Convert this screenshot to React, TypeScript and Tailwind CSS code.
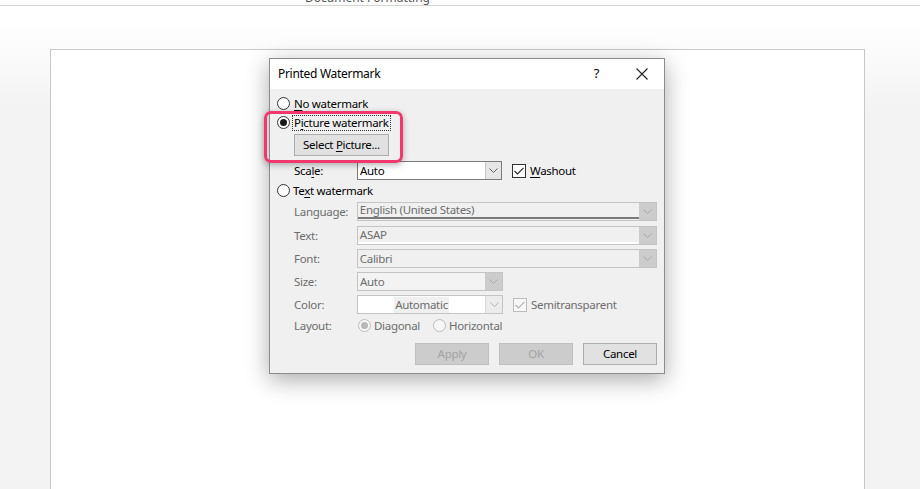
import React from "react";

const FONT = { fontFamily: '"Noto Sans", "Open Sans", sans-serif' };

function Radio({ checked, disabled }: { checked?: boolean; disabled?: boolean }) {
  return (
    <span
      className={`flex h-[13px] w-[13px] shrink-0 items-center justify-center rounded-full border ${
        disabled ? "border-[#bcbcbc] bg-[#f7f7f7]" : "border-[#333333] bg-white"
      }`}
    >
      {checked && (
        <span className={`h-[7px] w-[7px] rounded-full ${disabled ? "bg-[#b8b8b8]" : "bg-[#1a1a1a]"}`} />
      )}
    </span>
  );
}

function Check({ disabled }: { disabled?: boolean }) {
  return (
    <span
      className={`flex h-[14px] w-[14px] shrink-0 items-center justify-center border ${
        disabled ? "border-[#bcbcbc] bg-[#f7f7f7]" : "border-[#333333] bg-white"
      }`}
    >
      <svg width="10" height="8" viewBox="0 0 10 8">
        <path d="M0.5 4 L3.5 7 L9.5 0.8" fill="none" stroke={disabled ? "#b0b0b0" : "#222"} strokeWidth="1.1" />
      </svg>
    </span>
  );
}

function Chevron({ color }: { color: string }) {
  return (
    <svg width="9" height="5" viewBox="0 0 9 5">
      <path d="M0.5 0.5 L4.5 4.5 L8.5 0.5" fill="none" stroke={color} strokeWidth="1" />
    </svg>
  );
}

function U({ children }: { children: React.ReactNode }) {
  return <span className="underline decoration-[1px] underline-offset-[2px]">{children}</span>;
}

export default function App() {
  return (
    <div
      className="h-[489px] w-[920px] overflow-hidden bg-[linear-gradient(#ffffff_0px,#ffffff_24px,#f3f3f3_110px)] text-[11.5px] tracking-[-0.3px] text-black"
      style={FONT}
    >
      {/* top band */}
      <div className="h-[6px] overflow-hidden border-b border-[#d4d4d4] bg-white">
        <div className="-mt-[9px] pl-[305px] text-[12px] leading-[14px] tracking-normal text-[#555555]">
          Document Formatting
        </div>
      </div>

      {/* document page */}
      <div className="ml-[50px] mt-[43px] h-[460px] w-[815px] border border-[#c8c8c8] bg-white">
        <div className="relative ml-[218px] mt-[8px] w-[396px] border border-[#8c8c8c] bg-[#f0f0f0] shadow-[0_6px_22px_rgba(0,0,0,0.33)]">
          {/* title bar */}
          <div className="flex h-[30px] items-center bg-white pl-[8px]">
            <span className="flex-1 text-[12px]">Printed Watermark</span>
            <span className="mr-[37px] text-[13px]">?</span>
            <svg className="mr-[16px]" width="12" height="12" viewBox="0 0 12 12">
              <path d="M0.5 0.5 L11.5 11.5 M11.5 0.5 L0.5 11.5" stroke="#222" strokeWidth="1.1" />
            </svg>
          </div>

          {/* body */}
          <div className="flex flex-col pb-[8px] pl-[7px] pr-[7px] pt-[5px]">
            <div className="flex h-[19px] items-center gap-[3px]">
              <Radio />
              <span className="ml-[1px]">
                <U>N</U>o watermark
              </span>
            </div>
            <div className="flex h-[19px] items-center gap-[2px]">
              <Radio checked />
              <span className="border border-dotted border-[#333333] px-[1px] leading-[14px]">
                P<U>i</U>cture watermark
              </span>
            </div>
            <div className="ml-[17px] mt-[2px] flex h-[22px] w-[95px] items-center justify-center border border-[#adadad] bg-[#e1e1e1]">
              <span>
                Select <U>P</U>icture...
              </span>
            </div>

            <div className="ml-[17px] mt-[5px] flex h-[19px] items-center">
              <span className="w-[63px]">
                Sca<U>l</U>e:
              </span>
              <div className="flex h-[19px] w-[145px] items-center border border-[#7a7a7a] bg-white">
                <span className="flex-1 pl-[2px]">Auto</span>
                <span className="flex h-full w-[16px] items-center justify-center border-l border-[#c8c8c8] bg-[#e6e6e6]">
                  <Chevron color="#606060" />
                </span>
              </div>
              <span className="ml-[10px]">
                <Check />
              </span>
              <span className="ml-[4px]">
                <U>W</U>ashout
              </span>
            </div>

            <div className="mt-[1px] flex h-[19px] items-center gap-[3px]">
              <Radio />
              <span>
                Te<U>x</U>t watermark
              </span>
            </div>

            {/* Language */}
            <div className="ml-[17px] mt-[2px] flex h-[19px] items-center text-[#6d6d6d]">
              <span className="w-[63px]">Language:</span>
              <div className="flex h-[19px] w-[301px] items-stretch border border-[#c4c4c4] bg-[#f0f0f0]">
                <div className="flex flex-1 flex-col">
                  <span className="flex-1 pl-[2px] leading-[14px]">English (United States)</span>
                  <span className="mb-[1px] h-[3px] border-y border-[#7a7a7a]" />
                </div>
                <span className="flex w-[17px] items-center justify-center bg-[#cccccc]">
                  <Chevron color="#a8a8a8" />
                </span>
              </div>
            </div>

            {/* Text */}
            <div className="ml-[17px] mt-[5px] flex h-[19px] items-center text-[#6d6d6d]">
              <span className="w-[63px]">Text:</span>
              <div className="flex h-[19px] w-[301px] items-stretch border border-[#c4c4c4] bg-[#f0f0f0]">
                <div className="flex flex-1 flex-col">
                  <span className="flex-1 pl-[2px] leading-[15px]">ASAP</span>
                  <span className="h-[2px] bg-white" />
                </div>
                <span className="flex w-[17px] items-center justify-center bg-[#cccccc]">
                  <Chevron color="#a8a8a8" />
                </span>
              </div>
            </div>

            {/* Font */}
            <div className="ml-[17px] mt-[4px] flex h-[19px] items-center text-[#6d6d6d]">
              <span className="w-[63px]">Font:</span>
              <div className="flex h-[19px] w-[301px] items-center border border-[#c4c4c4] bg-[#f0f0f0]">
                <span className="flex-1 pl-[2px]">Calibri</span>
                <span className="flex h-full w-[17px] items-center justify-center bg-[#cccccc]">
                  <Chevron color="#a8a8a8" />
                </span>
              </div>
            </div>

            {/* Size */}
            <div className="ml-[17px] mt-[4px] flex h-[19px] items-center text-[#6d6d6d]">
              <span className="w-[63px]">Size:</span>
              <div className="flex h-[19px] w-[146px] items-center border border-[#c4c4c4] bg-[#f3f3f3]">
                <span className="flex-1 pl-[2px]">Auto</span>
                <span className="flex h-full w-[17px] items-center justify-center bg-[#cccccc]">
                  <Chevron color="#a8a8a8" />
                </span>
              </div>
            </div>

            {/* Color */}
            <div className="ml-[17px] mt-[4px] flex h-[19px] items-center text-[#6d6d6d]">
              <span className="w-[63px]">Color:</span>
              <div className="flex h-[19px] w-[146px] items-center border border-[#c4c4c4] bg-white">
                <span className="flex flex-1 justify-center">
                  <span className="bg-[#f0f0f0] px-[1px] leading-[16px]">Automatic</span>
                </span>
                <span className="flex h-full w-[17px] items-center justify-center border-l border-[#d8d8d8] bg-[#ececec]">
                  <Chevron color="#b0b0b0" />
                </span>
              </div>
              <span className="ml-[10px]">
                <Check disabled />
              </span>
              <span className="ml-[4px]">Semitransparent</span>
            </div>

            {/* Layout */}
            <div className="ml-[17px] mt-[2px] flex h-[19px] items-center text-[#6d6d6d]">
              <span className="w-[64px]">Layout:</span>
              <Radio checked disabled />
              <span className="ml-[3px]">Diagonal</span>
              <span className="ml-[13px]">
                <Radio disabled />
              </span>
              <span className="ml-[3px]">Horizontal</span>
            </div>

            {/* Buttons */}
            <div className="mt-[8px] flex justify-end gap-[10px]">
              <div className="flex h-[22px] w-[74px] items-center justify-center border border-[#bfbfbf] bg-[#cccccc] text-[#a3a3a3]">
                Apply
              </div>
              <div className="flex h-[22px] w-[74px] items-center justify-center border border-[#bfbfbf] bg-[#cccccc] text-[#a3a3a3]">
                OK
              </div>
              <div className="flex h-[22px] w-[74px] items-center justify-center border border-[#adadad] bg-[#e1e1e1]">
                Cancel
              </div>
            </div>
          </div>

          {/* pink highlight overlay */}
          <div className="pointer-events-none absolute left-[-6px] top-[52px] h-[52px] w-[139px] rounded-[7px] border-[3px] border-[#f0386f] shadow-[0_2px_6px_rgba(0,0,0,0.3)]" />
        </div>
      </div>
    </div>
  );
}
